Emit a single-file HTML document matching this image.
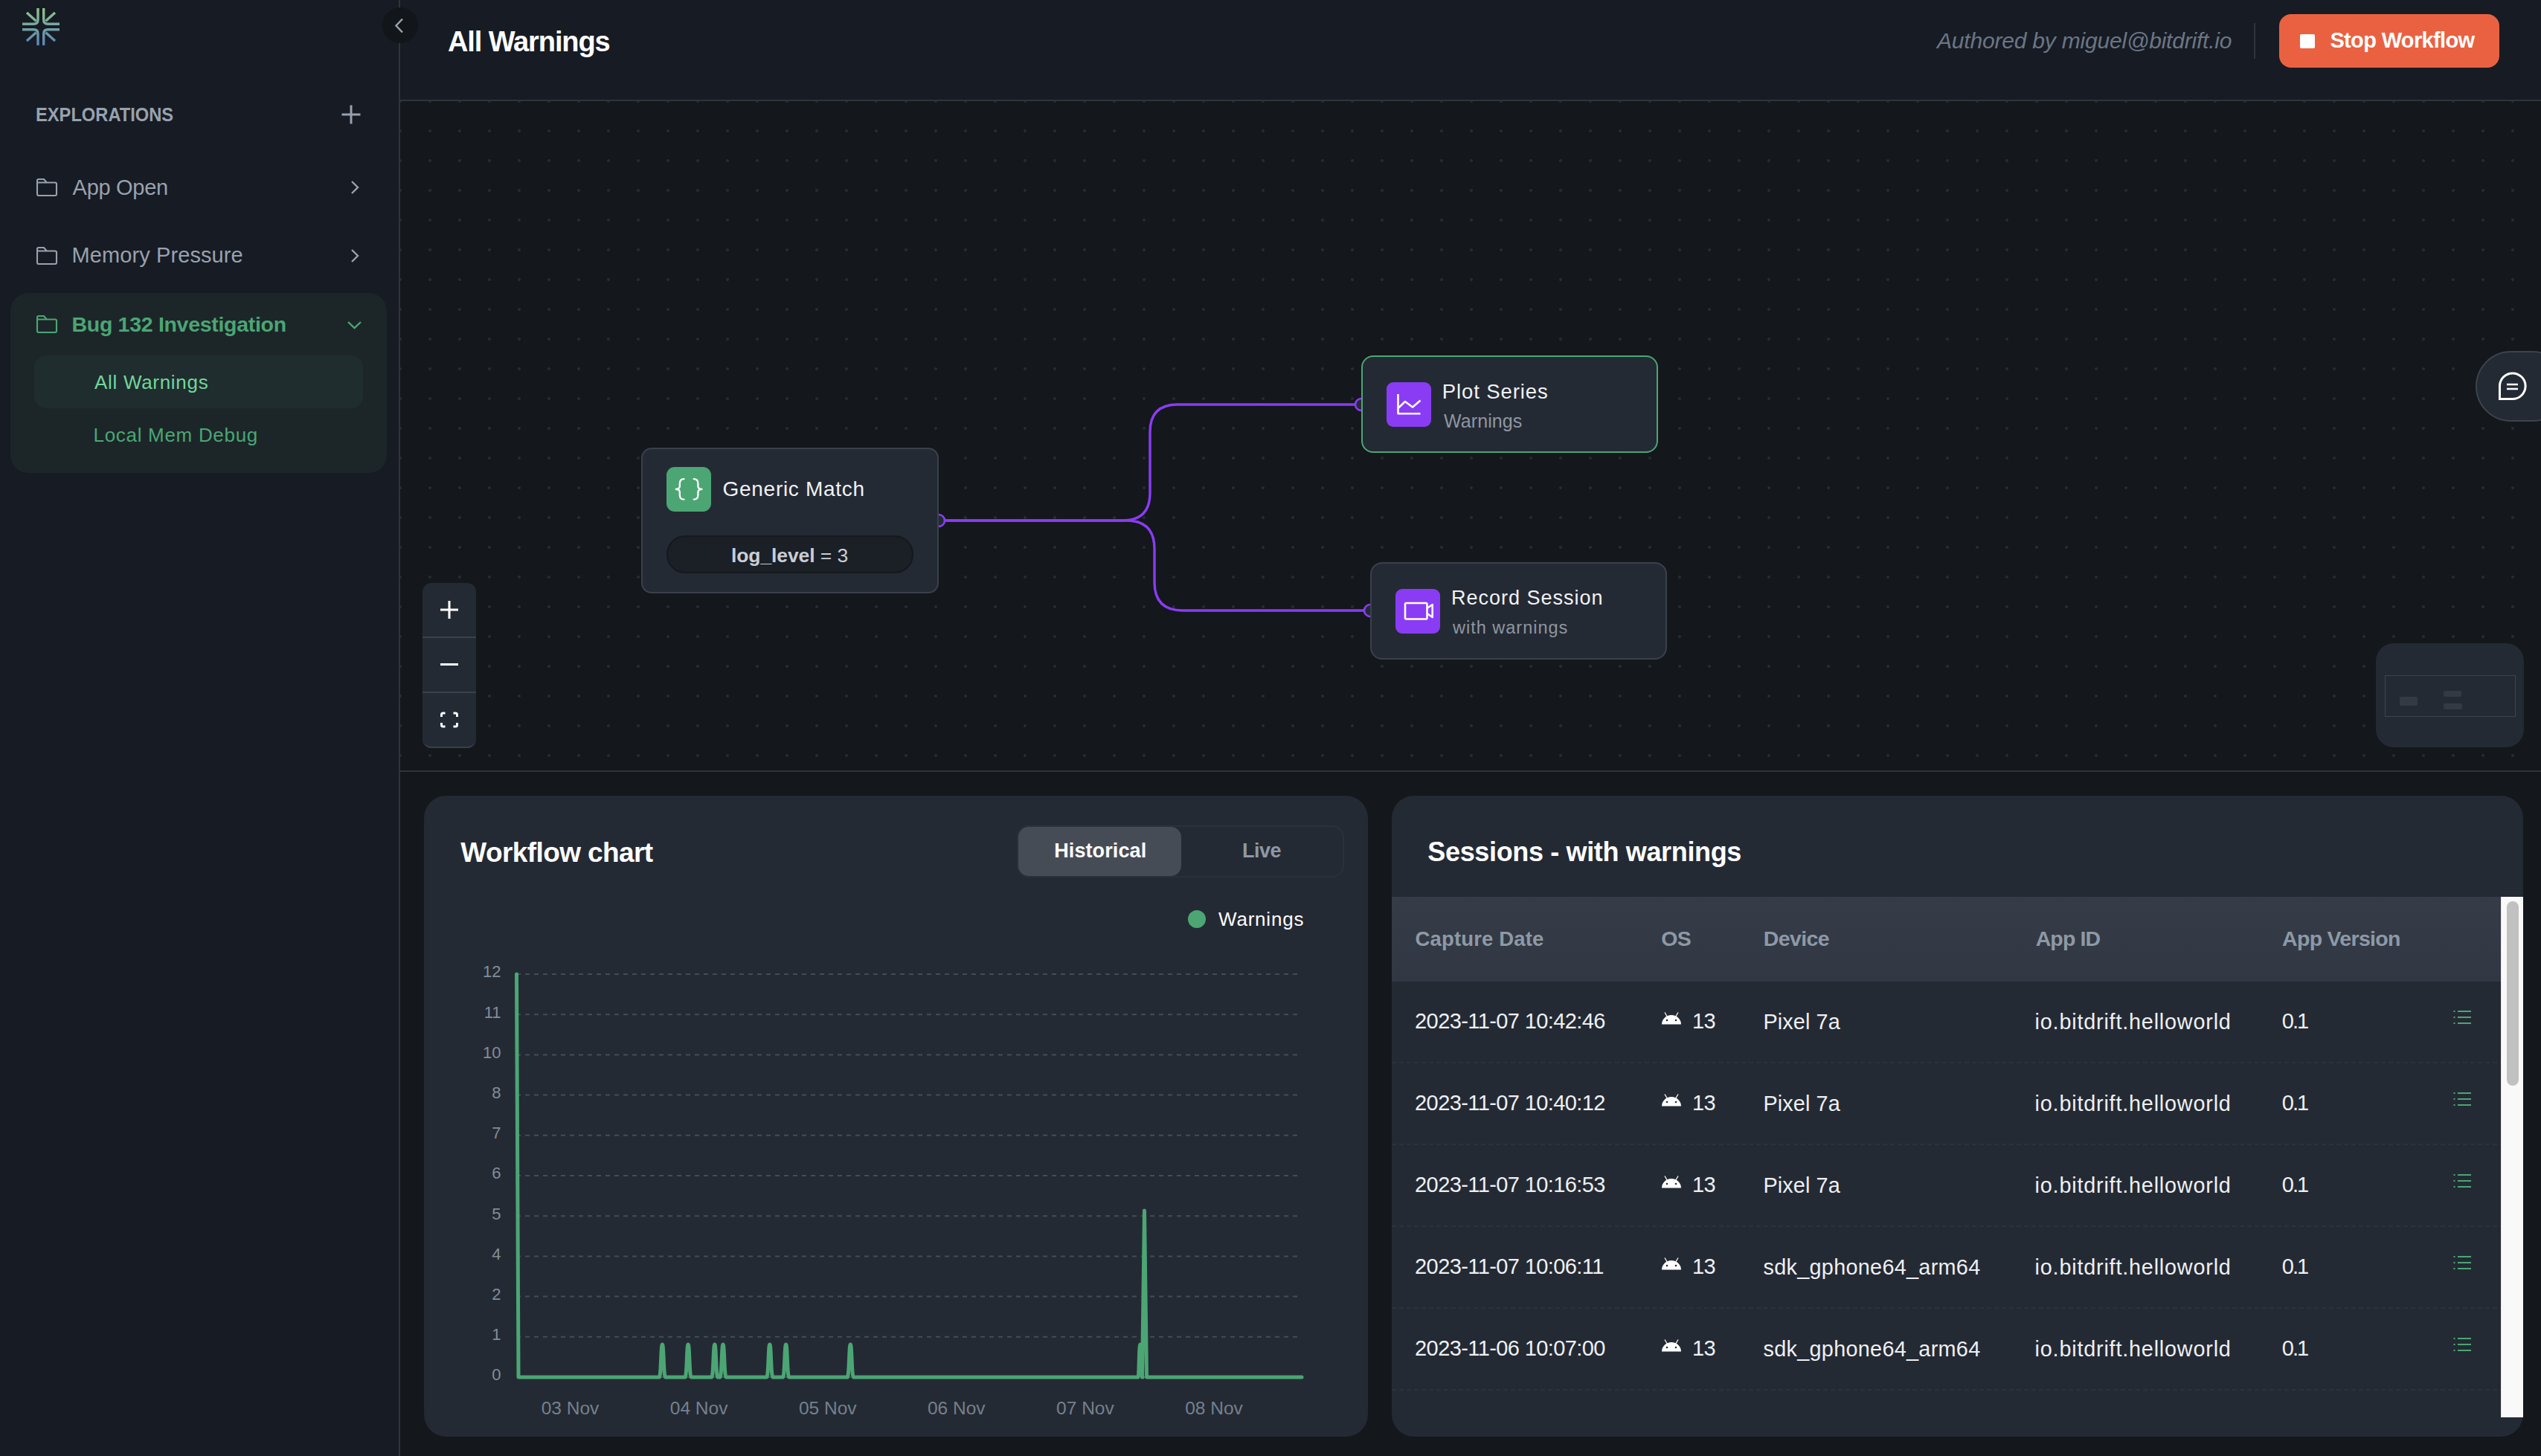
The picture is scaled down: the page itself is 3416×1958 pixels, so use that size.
<!DOCTYPE html>
<html><head><meta charset="utf-8"><title>All Warnings</title>
<style>
html,body{margin:0;padding:0}
body{width:3416px;height:1958px;position:relative;overflow:hidden;background:#14171b;font-family:"Liberation Sans", sans-serif}
.r{position:absolute;box-sizing:content-box}
svg.r{overflow:visible}
.t{position:absolute;white-space:nowrap;line-height:1;font-family:"Liberation Sans", sans-serif}
</style></head><body>
<div class="r" style="left:0px;top:0px;width:536px;height:1958px;background:#171b24;"></div>
<div class="r" style="left:536px;top:0px;width:2px;height:1958px;background:#2e343c;"></div>
<div class="r" style="left:538px;top:0px;width:2878px;height:134px;background:#171b24;"></div>
<div class="r" style="left:538px;top:134px;width:2878px;height:2px;background:#2e343c;"></div>
<div class="r" style="left:538px;top:136px;width:2878px;height:900px;background-color:#14171b;background-image:radial-gradient(circle at 20px 20px,#252b35 0,#252b35 1.6px,rgba(37,43,53,0) 2.3px);background-size:40px 40px;background-position:-20px -20px"></div>
<div class="r" style="left:538px;top:1036px;width:2878px;height:2px;background:#2e343c;"></div>
<svg class="r" style="left:0;top:0" width="120" height="80" viewBox="0 0 120 80">
<defs><linearGradient id="lg" x1="0" y1="11" x2="0" y2="61" gradientUnits="userSpaceOnUse"><stop offset="0" stop-color="#8fc586"/><stop offset="1" stop-color="#5a84ba"/></linearGradient></defs>
<g fill="none" stroke="url(#lg)" stroke-width="3.4">
<path d="M51 11 V26.5 Q51 32.2 45.3 32.2 H30"/>
<path d="M58.7 11 V26.5 Q58.7 32.2 64.4 32.2 H80"/>
<path d="M51 61 V45.4 Q51 39.7 45.3 39.7 H30"/>
<path d="M58.7 61 V45.4 Q58.7 39.7 64.4 39.7 H80"/>
<path d="M36 17 L48.5 28.2"/><path d="M74 17 L61.5 28.2"/>
<path d="M36 55 L48.5 43.8"/><path d="M74 55 L61.5 43.8"/>
</g></svg>
<div class="r" style="left:514px;top:10px;width:48px;height:48px;border-radius:24px;background:#121519"></div>
<svg class="r" style="left:0;top:0" width="600" height="80"><path d="M541 25.5 L532.5 34.5 L541 43.5" fill="none" stroke="#98a2ae" stroke-width="2.5"/></svg>
<div class="t" style="left:47.5px;top:141.4px;font-size:26px;letter-spacing:0px;font-weight:700;font-style:normal;color:#98a2ae;transform:scaleX(0.911);transform-origin:0 0">EXPLORATIONS</div>
<svg class="r" style="left:0;top:0" width="536" height="640" viewBox="0 0 536 640"><g fill="none" stroke-width="2.4"><path d="M459.5 154 H484.5 M472 141.5 V166.5" stroke="#98a2ae" stroke-width="3"/><path d="M473 244 L481 252 L473 260" stroke="#98a2ae"/><path d="M473 336 L481 344 L473 352" stroke="#98a2ae"/></g></svg>
<svg class="r" style="left:0;top:0" width="536" height="640"><path d="M50 261 V243 Q50 241 52 241 H59 L62.8 245.5 H74 Q76 245.5 76 247.5 V261 Q76 263 74 263 H52 Q50 263 50 261 Z M50 245.5 H63" fill="none" stroke="#98a2ae" stroke-width="2.1"/><path d="M50 353 V335 Q50 333 52 333 H59 L62.8 337.5 H74 Q76 337.5 76 339.5 V353 Q76 355 74 355 H52 Q50 355 50 353 Z M50 337.5 H63" fill="none" stroke="#98a2ae" stroke-width="2.1"/></svg>
<div class="t" style="left:97.6px;top:237.5px;font-size:29px;letter-spacing:-0.3px;font-weight:400;font-style:normal;color:#98a2ae;">App Open</div>
<div class="t" style="left:96.5px;top:329.4px;font-size:29px;letter-spacing:0.1px;font-weight:400;font-style:normal;color:#98a2ae;">Memory Pressure</div>
<div class="r" style="left:14px;top:394px;width:506px;height:242px;border-radius:24px;background:#1c2629"></div>
<div class="r" style="left:46px;top:478px;width:442px;height:71px;border-radius:16px;background:#202d2f"></div>
<svg class="r" style="left:0;top:0" width="536" height="640"><path d="M50 445 V427 Q50 425 52 425 H59 L62.8 429.5 H74 Q76 429.5 76 431.5 V445 Q76 447 74 447 H52 Q50 447 50 445 Z M50 429.5 H63" fill="none" stroke="#4ba674" stroke-width="2.1"/><path d="M468 433 L476.5 441 L485 433" fill="none" stroke="#4ba674" stroke-width="2.4"/></svg>
<div class="t" style="left:96.5px;top:422.3px;font-size:28.5px;letter-spacing:-0.3px;font-weight:700;font-style:normal;color:#4ba674;">Bug 132 Investigation</div>
<div class="t" style="left:127.0px;top:500.7px;font-size:26px;letter-spacing:0.7px;font-weight:400;font-style:normal;color:#72d69c;">All Warnings</div>
<div class="t" style="left:125.5px;top:571.5px;font-size:26px;letter-spacing:0.7px;font-weight:400;font-style:normal;color:#4ba674;">Local Mem Debug</div>
<div class="t" style="left:602.0px;top:36.9px;font-size:38px;letter-spacing:-1.1px;font-weight:700;font-style:normal;color:#ffffff;">All Warnings</div>
<div class="t" style="left:2604.0px;top:40.2px;font-size:30px;letter-spacing:-0.2px;font-weight:400;font-style:italic;color:#6b7684;">Authored by miguel@bitdrift.io</div>
<div class="r" style="left:3030px;top:31px;width:2px;height:48px;background:#2e343c;"></div>
<div class="r" style="left:3064px;top:19px;width:296px;height:72px;border-radius:16px;background:#ea6141"></div>
<div class="r" style="left:3092px;top:45.5px;width:20px;height:19.5px;border-radius:2px;background:#fff"></div>
<div class="t" style="left:3132.4px;top:40.4px;font-size:29px;letter-spacing:-0.65px;font-weight:700;font-style:normal;color:#ffffff;">Stop Workflow</div>
<svg class="r" style="left:0;top:0" width="3416" height="1040">
<g fill="none" stroke="#8a3cf4" stroke-width="3.4">
<path d="M1262 700 H1509 Q1546 700 1546 663 V581 Q1546 544 1583 544 H1830"/>
<path d="M1262 700 H1514 Q1552 700 1552 738 V783 Q1552 821 1590 821 H1842"/>
</g>
<g fill="#242a34" stroke="#8a3cf4" stroke-width="2.6">
<circle cx="1262" cy="700" r="8"/><circle cx="1830" cy="544" r="8"/><circle cx="1842" cy="821" r="8"/>
</g></svg>
<div class="r" style="left:862px;top:602px;width:396px;height:192px;border:2px solid #3a414b;border-radius:14px;background:#242a34"></div>
<div class="r" style="left:896px;top:628px;width:60px;height:60px;border-radius:11px;background:#4ba674"></div>
<svg class="r" style="left:0;top:0" width="1300" height="800"><g fill="none" stroke="#fff" stroke-width="2.3" stroke-linecap="round"><path d="M919.5 644.2 Q913.8 644.2 913.8 650.5 V654 Q913.8 657.8 907.8 657.8 Q913.8 657.8 913.8 661.6 V665.5 Q913.8 671.6 919.5 671.6"/><path d="M932.7 644.2 Q938.4 644.2 938.4 650.5 V654 Q938.4 657.8 944.4 657.8 Q938.4 657.8 938.4 661.6 V665.5 Q938.4 671.6 932.7 671.6"/></g></svg>
<div class="t" style="left:971.6px;top:644.2px;font-size:28px;letter-spacing:0.7px;font-weight:400;font-style:normal;color:#f0f2f4;">Generic Match</div>
<div class="r" style="left:896px;top:720px;width:328px;height:47px;border:2px solid #15181d;border-radius:25px;background:#1b1f26"></div>
<div class="t" style="left:983px;top:734.2px;font-size:26.5px;color:#c8ced6;letter-spacing:-0.1px"><b>log_level</b> = 3</div>
<div class="r" style="left:1830px;top:478px;width:395px;height:127px;border:2.5px solid #4ba674;border-radius:16px;background:#242a34"></div>
<div class="r" style="left:1864px;top:514px;width:60px;height:60px;border-radius:9px;background:#8a3cf4"></div>
<svg class="r" style="left:0;top:0" width="2300" height="900"><g fill="none" stroke="#fff" stroke-width="2.6" stroke-linejoin="round"><path d="M1879.5 530 V556.2 H1909.5"/><path d="M1879.5 549 L1889 540 L1899 547.5 L1909.5 538.5"/><rect x="1889" y="811" width="29.5" height="21.5" rx="1.5"/><path d="M1918.5 818 L1925.7 813 V830 L1918.5 825"/></g></svg>
<div class="t" style="left:1938.8px;top:512.6px;font-size:27.5px;letter-spacing:0.9px;font-weight:400;font-style:normal;color:#f0f2f4;">Plot Series</div>
<div class="t" style="left:1941.0px;top:553.8px;font-size:25px;letter-spacing:0.1px;font-weight:400;font-style:normal;color:#8e96a0;">Warnings</div>
<div class="r" style="left:1842px;top:756px;width:395px;height:127px;border:2px solid #3a414b;border-radius:16px;background:#242a34"></div>
<div class="r" style="left:1876px;top:792px;width:60px;height:60px;border-radius:9px;background:#8a3cf4"></div>
<svg class="r" style="left:0;top:0" width="2300" height="900"><g fill="none" stroke="#fff" stroke-width="2.6" stroke-linejoin="round"><rect x="1889" y="811" width="29.5" height="21.5" rx="1.5"/><path d="M1918.5 818 L1925.7 813 V830 L1918.5 825"/></g></svg>
<div class="t" style="left:1950.9px;top:790.6px;font-size:27px;letter-spacing:1.0px;font-weight:400;font-style:normal;color:#f0f2f4;">Record Session</div>
<div class="t" style="left:1953.0px;top:833.0px;font-size:23.5px;letter-spacing:1.0px;font-weight:400;font-style:normal;color:#8e96a0;">with warnings</div>
<div class="r" style="left:568px;top:784px;width:72px;height:220px;border-radius:12px;background:#242a34;border-bottom:2px solid #3a414b"></div>
<div class="r" style="left:568px;top:856px;width:72px;height:2px;background:#3a414b;"></div>
<div class="r" style="left:568px;top:930px;width:72px;height:2px;background:#3a414b;"></div>
<svg class="r" style="left:0;top:0" width="700" height="1040"><g fill="none" stroke="#fff" stroke-width="3"><path d="M592 820 H616 M604 808 V832"/><path d="M592 893.5 H616"/><path d="M593.5 964 V961 Q593.5 959 595.5 959 H598.5 M609.5 959 H612.5 Q614.5 959 614.5 961 V964 M614.5 972 V975 Q614.5 977 612.5 977 H609.5 M598.5 977 H595.5 Q593.5 977 593.5 975 V972"/></g></svg>
<div class="r" style="left:3328px;top:472px;width:120px;height:91px;border:2px solid #3d444e;border-radius:48px;background:#242a34"></div>
<svg class="r" style="left:3300px;top:440px" width="116" height="140"><g fill="none" stroke="#fff" stroke-width="3"><path d="M60.5 96.5 V79 A17.3 17.3 0 1 1 77.8 96.5 Z"/><path d="M70 77 H85 M70 83 H85" stroke-width="2.6"/></g></svg>
<div class="r" style="left:3194px;top:865px;width:199px;height:140px;border-radius:24px;background:#242a34"></div>
<div class="r" style="left:3206px;top:908px;width:174px;height:54px;border:1.5px solid #3d444e"></div>
<div class="r" style="left:3226px;top:937px;width:24px;height:12px;background:#343a44;border-radius:2px"></div>
<div class="r" style="left:3285px;top:929px;width:24px;height:8px;background:#343a44;border-radius:2px"></div>
<div class="r" style="left:3285px;top:946px;width:25px;height:8px;background:#343a44;border-radius:2px"></div>
<div class="r" style="left:570px;top:1070px;width:1269px;height:862px;border-radius:30px;background:#242a34"></div>
<div class="t" style="left:619.3px;top:1128.1px;font-size:37px;letter-spacing:-0.6px;font-weight:700;font-style:normal;color:#ffffff;">Workflow chart</div>
<div class="r" style="left:1367px;top:1110px;width:436px;height:66px;border:2px solid #2b3139;border-radius:16px"></div>
<div class="r" style="left:1369px;top:1112px;width:219px;height:66px;border-radius:14px;background:#464c56"></div>
<div class="t" style="left:1417.2px;top:1131.3px;font-size:27px;letter-spacing:0.1px;font-weight:700;font-style:normal;color:#ffffff;">Historical</div>
<div class="t" style="left:1669.9px;top:1131.3px;font-size:27px;letter-spacing:-0.5px;font-weight:700;font-style:normal;color:#8e99a6;">Live</div>
<div class="r" style="left:1597px;top:1224px;width:24px;height:24px;border-radius:12px;background:#4ba674"></div>
<div class="t" style="left:1638.0px;top:1222.6px;font-size:26px;letter-spacing:0.8px;font-weight:400;font-style:normal;color:#ffffff;">Warnings</div>
<svg class="r" style="left:0;top:0" width="1900" height="1958"><g stroke="#454c56" stroke-width="2" stroke-dasharray="6 6" stroke-dashoffset="3"><path d="M697 1310.0 H1744"/><path d="M697 1364.2 H1744"/><path d="M697 1418.4 H1744"/><path d="M697 1472.6 H1744"/><path d="M697 1526.8 H1744"/><path d="M697 1581.0 H1744"/><path d="M697 1635.2 H1744"/><path d="M697 1689.4 H1744"/><path d="M697 1743.6 H1744"/><path d="M697 1797.8 H1744"/><path d="M697 1852.0 H1744"/></g><g fill="#838d99" font-family="Liberation Sans" font-size="22" text-anchor="end"><text x="673.5" y="1314.3">12</text><text x="673.5" y="1368.5">11</text><text x="673.5" y="1422.7">10</text><text x="673.5" y="1476.9">8</text><text x="673.5" y="1531.1">7</text><text x="673.5" y="1585.3">6</text><text x="673.5" y="1639.5">5</text><text x="673.5" y="1693.7">4</text><text x="673.5" y="1747.9">2</text><text x="673.5" y="1802.1">1</text><text x="673.5" y="1856.3">0</text></g><g fill="#76808c" font-family="Liberation Sans" font-size="24.5" text-anchor="middle"><text x="766.5" y="1901.8">03 Nov</text><text x="939.6" y="1901.8">04 Nov</text><text x="1112.7" y="1901.8">05 Nov</text><text x="1285.8" y="1901.8">06 Nov</text><text x="1458.9" y="1901.8">07 Nov</text><text x="1632.0" y="1901.8">08 Nov</text></g><path d="M694.5 1310 L697 1852 L886.2 1852 C888.8 1852 888.4 1808 890.4 1808 C892.4 1808 892.0 1852 894.6 1852 L920.9 1852 C923.5 1852 923.1 1808 925.1 1808 C927.1 1808 926.7 1852 929.3 1852 L956.6 1852 C959.2 1852 958.8 1808 960.8 1808 C962.8 1808 962.4 1852 965.0 1852 L967.8 1852 C970.4 1852 970.0 1808 972.0 1808 C974.0 1808 973.6 1852 976.2 1852 L1030.6 1852 C1033.2 1852 1032.8 1808 1034.8 1808 C1036.8 1808 1036.4 1852 1039.0 1852 L1052.4 1852 C1055.0 1852 1054.6 1808 1056.6 1808 C1058.6 1808 1058.2 1852 1060.8 1852 L1139.1 1852 C1141.7 1852 1141.3 1808 1143.3 1808 C1145.3 1808 1144.9 1852 1147.5 1852 L1530.0 1852 C1531.4 1852 1531.0 1808 1533.0 1808 C1535.0 1808 1534.6 1852 1536.0 1852 L1535.5 1852 L1538.5 1628 L1541.5 1852 L1750 1852" fill="none" stroke="#4ba674" stroke-width="5" stroke-linecap="round" stroke-linejoin="round"/></svg>
<div class="r" style="left:1871px;top:1070px;width:1521px;height:862px;border-radius:30px;background:#242a34;overflow:hidden"></div>
<div class="t" style="left:1919.3px;top:1128.4px;font-size:36px;letter-spacing:-0.35px;font-weight:700;font-style:normal;color:#ffffff;">Sessions - with warnings</div>
<div class="r" style="left:1871px;top:1206px;width:1491px;height:114px;background:linear-gradient(#353c47,#313843);"></div>
<div class="t" style="left:1902.5px;top:1248.6px;font-size:27.5px;letter-spacing:0.15px;font-weight:700;font-style:normal;color:#8e99a6;">Capture Date</div>
<div class="t" style="left:2233.2px;top:1247.6px;font-size:28.5px;letter-spacing:-0.5px;font-weight:700;font-style:normal;color:#8e99a6;">OS</div>
<div class="t" style="left:2370.8px;top:1247.6px;font-size:28.5px;letter-spacing:-0.6px;font-weight:700;font-style:normal;color:#8e99a6;">Device</div>
<div class="t" style="left:2736.7px;top:1247.6px;font-size:28.5px;letter-spacing:-0.9px;font-weight:700;font-style:normal;color:#8e99a6;">App ID</div>
<div class="t" style="left:3068.1px;top:1247.6px;font-size:28.5px;letter-spacing:-0.7px;font-weight:700;font-style:normal;color:#8e99a6;">App Version</div>
<div class="t" style="left:1902.1px;top:1359.3px;font-size:29px;letter-spacing:-0.6px;font-weight:400;font-style:normal;color:#eef0f3;">2023-11-07 10:42:46</div>
<div class="t" style="left:2275.0px;top:1359.3px;font-size:29px;letter-spacing:-0.6px;font-weight:400;font-style:normal;color:#eef0f3;">13</div>
<div class="t" style="left:2370.5px;top:1359.5px;font-size:28.8px;letter-spacing:0.1px;font-weight:400;font-style:normal;color:#eef0f3;">Pixel 7a</div>
<div class="t" style="left:2735.6px;top:1359.5px;font-size:28.8px;letter-spacing:0.8px;font-weight:400;font-style:normal;color:#eef0f3;">io.bitdrift.helloworld</div>
<div class="t" style="left:3067.8px;top:1359.3px;font-size:29px;letter-spacing:-2.0px;font-weight:400;font-style:normal;color:#eef0f3;">0.1</div>
<div class="t" style="left:1902.1px;top:1469.3px;font-size:29px;letter-spacing:-0.6px;font-weight:400;font-style:normal;color:#eef0f3;">2023-11-07 10:40:12</div>
<div class="t" style="left:2275.0px;top:1469.3px;font-size:29px;letter-spacing:-0.6px;font-weight:400;font-style:normal;color:#eef0f3;">13</div>
<div class="t" style="left:2370.5px;top:1469.5px;font-size:28.8px;letter-spacing:0.1px;font-weight:400;font-style:normal;color:#eef0f3;">Pixel 7a</div>
<div class="t" style="left:2735.6px;top:1469.5px;font-size:28.8px;letter-spacing:0.8px;font-weight:400;font-style:normal;color:#eef0f3;">io.bitdrift.helloworld</div>
<div class="t" style="left:3067.8px;top:1469.3px;font-size:29px;letter-spacing:-2.0px;font-weight:400;font-style:normal;color:#eef0f3;">0.1</div>
<div class="t" style="left:1902.1px;top:1579.3px;font-size:29px;letter-spacing:-0.6px;font-weight:400;font-style:normal;color:#eef0f3;">2023-11-07 10:16:53</div>
<div class="t" style="left:2275.0px;top:1579.3px;font-size:29px;letter-spacing:-0.6px;font-weight:400;font-style:normal;color:#eef0f3;">13</div>
<div class="t" style="left:2370.5px;top:1579.5px;font-size:28.8px;letter-spacing:0.1px;font-weight:400;font-style:normal;color:#eef0f3;">Pixel 7a</div>
<div class="t" style="left:2735.6px;top:1579.5px;font-size:28.8px;letter-spacing:0.8px;font-weight:400;font-style:normal;color:#eef0f3;">io.bitdrift.helloworld</div>
<div class="t" style="left:3067.8px;top:1579.3px;font-size:29px;letter-spacing:-2.0px;font-weight:400;font-style:normal;color:#eef0f3;">0.1</div>
<div class="t" style="left:1902.1px;top:1689.3px;font-size:29px;letter-spacing:-0.6px;font-weight:400;font-style:normal;color:#eef0f3;">2023-11-07 10:06:11</div>
<div class="t" style="left:2275.0px;top:1689.3px;font-size:29px;letter-spacing:-0.6px;font-weight:400;font-style:normal;color:#eef0f3;">13</div>
<div class="t" style="left:2370.5px;top:1689.5px;font-size:28.8px;letter-spacing:0.3px;font-weight:400;font-style:normal;color:#eef0f3;">sdk_gphone64_arm64</div>
<div class="t" style="left:2735.6px;top:1689.5px;font-size:28.8px;letter-spacing:0.8px;font-weight:400;font-style:normal;color:#eef0f3;">io.bitdrift.helloworld</div>
<div class="t" style="left:3067.8px;top:1689.3px;font-size:29px;letter-spacing:-2.0px;font-weight:400;font-style:normal;color:#eef0f3;">0.1</div>
<div class="t" style="left:1902.1px;top:1799.3px;font-size:29px;letter-spacing:-0.6px;font-weight:400;font-style:normal;color:#eef0f3;">2023-11-06 10:07:00</div>
<div class="t" style="left:2275.0px;top:1799.3px;font-size:29px;letter-spacing:-0.6px;font-weight:400;font-style:normal;color:#eef0f3;">13</div>
<div class="t" style="left:2370.5px;top:1799.5px;font-size:28.8px;letter-spacing:0.3px;font-weight:400;font-style:normal;color:#eef0f3;">sdk_gphone64_arm64</div>
<div class="t" style="left:2735.6px;top:1799.5px;font-size:28.8px;letter-spacing:0.8px;font-weight:400;font-style:normal;color:#eef0f3;">io.bitdrift.helloworld</div>
<div class="t" style="left:3067.8px;top:1799.3px;font-size:29px;letter-spacing:-2.0px;font-weight:400;font-style:normal;color:#eef0f3;">0.1</div>
<svg class="r" style="left:0;top:0" width="3416" height="1958"><path d="M2234 1377.5 A13 12.5 0 0 1 2260 1377.5 Z" fill="#fff"/><path d="M2238 1361.5 L2241.5 1367.5 M2256 1361.5 L2252.5 1367.5" stroke="#fff" stroke-width="1.3"/><circle cx="2241" cy="1372" r="1.3" fill="#242a34"/><circle cx="2253" cy="1372" r="1.3" fill="#242a34"/><path d="M3298.5 1360 H3300.5 M3304 1360 H3322" stroke="#4ba674" stroke-width="2"/><path d="M3298.5 1368 H3300.5 M3304 1368 H3322" stroke="#4ba674" stroke-width="2"/><path d="M3298.5 1376 H3300.5 M3304 1376 H3322" stroke="#4ba674" stroke-width="2"/><path d="M1871 1429 H3362" stroke="#33353a" stroke-width="1.6" stroke-dasharray="6 4"/><path d="M2234 1487.5 A13 12.5 0 0 1 2260 1487.5 Z" fill="#fff"/><path d="M2238 1471.5 L2241.5 1477.5 M2256 1471.5 L2252.5 1477.5" stroke="#fff" stroke-width="1.3"/><circle cx="2241" cy="1482" r="1.3" fill="#242a34"/><circle cx="2253" cy="1482" r="1.3" fill="#242a34"/><path d="M3298.5 1470 H3300.5 M3304 1470 H3322" stroke="#4ba674" stroke-width="2"/><path d="M3298.5 1478 H3300.5 M3304 1478 H3322" stroke="#4ba674" stroke-width="2"/><path d="M3298.5 1486 H3300.5 M3304 1486 H3322" stroke="#4ba674" stroke-width="2"/><path d="M1871 1539 H3362" stroke="#33353a" stroke-width="1.6" stroke-dasharray="6 4"/><path d="M2234 1597.5 A13 12.5 0 0 1 2260 1597.5 Z" fill="#fff"/><path d="M2238 1581.5 L2241.5 1587.5 M2256 1581.5 L2252.5 1587.5" stroke="#fff" stroke-width="1.3"/><circle cx="2241" cy="1592" r="1.3" fill="#242a34"/><circle cx="2253" cy="1592" r="1.3" fill="#242a34"/><path d="M3298.5 1580 H3300.5 M3304 1580 H3322" stroke="#4ba674" stroke-width="2"/><path d="M3298.5 1588 H3300.5 M3304 1588 H3322" stroke="#4ba674" stroke-width="2"/><path d="M3298.5 1596 H3300.5 M3304 1596 H3322" stroke="#4ba674" stroke-width="2"/><path d="M1871 1649 H3362" stroke="#33353a" stroke-width="1.6" stroke-dasharray="6 4"/><path d="M2234 1707.5 A13 12.5 0 0 1 2260 1707.5 Z" fill="#fff"/><path d="M2238 1691.5 L2241.5 1697.5 M2256 1691.5 L2252.5 1697.5" stroke="#fff" stroke-width="1.3"/><circle cx="2241" cy="1702" r="1.3" fill="#242a34"/><circle cx="2253" cy="1702" r="1.3" fill="#242a34"/><path d="M3298.5 1690 H3300.5 M3304 1690 H3322" stroke="#4ba674" stroke-width="2"/><path d="M3298.5 1698 H3300.5 M3304 1698 H3322" stroke="#4ba674" stroke-width="2"/><path d="M3298.5 1706 H3300.5 M3304 1706 H3322" stroke="#4ba674" stroke-width="2"/><path d="M1871 1759 H3362" stroke="#33353a" stroke-width="1.6" stroke-dasharray="6 4"/><path d="M2234 1817.5 A13 12.5 0 0 1 2260 1817.5 Z" fill="#fff"/><path d="M2238 1801.5 L2241.5 1807.5 M2256 1801.5 L2252.5 1807.5" stroke="#fff" stroke-width="1.3"/><circle cx="2241" cy="1812" r="1.3" fill="#242a34"/><circle cx="2253" cy="1812" r="1.3" fill="#242a34"/><path d="M3298.5 1800 H3300.5 M3304 1800 H3322" stroke="#4ba674" stroke-width="2"/><path d="M3298.5 1808 H3300.5 M3304 1808 H3322" stroke="#4ba674" stroke-width="2"/><path d="M3298.5 1816 H3300.5 M3304 1816 H3322" stroke="#4ba674" stroke-width="2"/><path d="M1871 1869 H3362" stroke="#33353a" stroke-width="1.6" stroke-dasharray="6 4"/></svg>
<div class="r" style="left:3362px;top:1206px;width:30px;height:700px;background:#f9f9f9;border-left:1px solid #e6e6e6;box-sizing:border-box"></div>
<div class="r" style="left:3370px;top:1212px;width:16px;height:248px;background:#c1c1c1;border-radius:8px"></div>
</body></html>
